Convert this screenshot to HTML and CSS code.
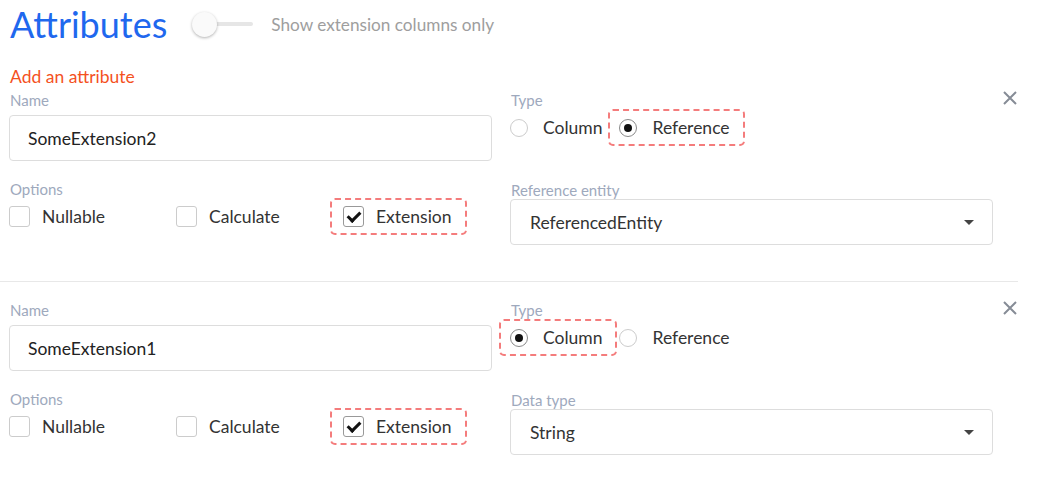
FILE: index.html
```html
<!DOCTYPE html>
<html lang="en">
<head>
    <meta charset="UTF-8">
    <title>Attributes</title>
    <link rel="stylesheet" href="styles.css">
</head>
<body>
    <div class="page">
        <header class="page-header">
            <h1>Attributes</h1>
            <div class="toggle">
                <span class="toggle-knob"></span>
                <span class="toggle-track"></span>
            </div>
            <span class="toggle-label">Show extension columns only</span>
        </header>

        <div class="add-link">Add an attribute</div>

        <!-- Attribute: reference -->
        <div class="attribute">
            <div class="col">
                <div class="field">
                    <label class="field-label">Name</label>
                    <input class="text-input" type="text" value="SomeExtension2">
                </div>
                <div class="field">
                    <label class="field-label">Options</label>
                    <div class="options">
                        <span class="option"><span class="checkbox"></span>Nullable</span>
                        <span class="option"><span class="checkbox"></span>Calculate</span>
                        <span class="option highlight check-hl"><span class="checkbox checked"></span>Extension</span>
                    </div>
                </div>
            </div>
            <div class="col">
                <div class="field">
                    <label class="field-label">Type</label>
                    <div class="radios">
                        <span class="option radio-option"><span class="radio"></span>Column</span>
                        <span class="option radio-option highlight radio-hl"><span class="radio checked"></span>Reference</span>
                    </div>
                </div>
                <div class="field field-select">
                    <label class="field-label">Reference entity</label>
                    <div class="select">
                        <span>ReferencedEntity</span>
                        <span class="caret"></span>
                    </div>
                </div>
            </div>
            <button class="close-btn" type="button">
                <svg width="14" height="14" viewBox="0 0 14 14"><path d="M1 1L13 13M13 1L1 13" stroke="#868c96" stroke-width="2"/></svg>
            </button>
        </div>

        <!-- Attribute: column -->
        <div class="attribute">
            <div class="col">
                <div class="field">
                    <label class="field-label">Name</label>
                    <input class="text-input" type="text" value="SomeExtension1">
                </div>
                <div class="field">
                    <label class="field-label">Options</label>
                    <div class="options">
                        <span class="option"><span class="checkbox"></span>Nullable</span>
                        <span class="option"><span class="checkbox"></span>Calculate</span>
                        <span class="option highlight check-hl"><span class="checkbox checked"></span>Extension</span>
                    </div>
                </div>
            </div>
            <div class="col">
                <div class="field">
                    <label class="field-label">Type</label>
                    <div class="radios">
                        <span class="option radio-option highlight radio-hl"><span class="radio checked"></span>Column</span>
                        <span class="option radio-option"><span class="radio"></span>Reference</span>
                    </div>
                </div>
                <div class="field field-select">
                    <label class="field-label">Data type</label>
                    <div class="select">
                        <span>String</span>
                        <span class="caret"></span>
                    </div>
                </div>
            </div>
            <button class="close-btn" type="button">
                <svg width="14" height="14" viewBox="0 0 14 14"><path d="M1 1L13 13M13 1L1 13" stroke="#868c96" stroke-width="2"/></svg>
            </button>
        </div>
    </div>
</body>
</html>
```

FILE: styles.css
```css
body {
    margin: 0;
    font-family: Lato, "Open Sans", sans-serif;
    color: #333333;
    background-color: #ffffff;
}

.page {
    width: 1018px;
}

/* Header */
.page-header {
    display: flex;
    align-items: center;
    padding: 3px 0 0 10px;
}

.page-header h1 {
    margin: 0;
    font-size: 36px;
    font-weight: 400;
    line-height: 42px;
    color: #1f68ee;
}

.toggle {
    display: flex;
    align-items: center;
    margin-left: 25px;
}

.toggle-knob {
    width: 25px;
    height: 25px;
    border-radius: 50%;
    background-color: #fafafa;
    box-shadow: 0 1px 3px rgba(0, 0, 0, 0.3);
    z-index: 1;
}

.toggle-track {
    width: 40px;
    height: 4px;
    margin-left: -4px;
    border-radius: 2px;
    background-color: #e6e6e6;
}

.toggle-label {
    margin-left: 18px;
    font-size: 17.2px;
    color: #9e9e9e;
}

.add-link {
    margin: 22px 0 0 10px;
    font-size: 17.5px;
    line-height: 20px;
    color: #f4511e;
}

/* Attribute block */
.attribute {
    display: flex;
    padding: 5px 0 36px 9px;
    border-bottom: 1px solid #e8e8e8;
}

.attribute + .attribute {
    padding-top: 20px;
}

.col {
    width: 483px;
}

.col + .col {
    margin-left: 18px;
}

.field-label {
    display: block;
    margin-left: 1px;
    font-size: 15px;
    line-height: 17px;
    color: #9ea9bd;
}

.field + .field {
    margin-top: 20px;
}

.text-input {
    box-sizing: border-box;
    width: 483px;
    height: 46px;
    margin-top: 6px;
    padding: 0 18px;
    border: 1px solid #dddddd;
    border-radius: 4px;
    font-family: inherit;
    font-size: 17.5px;
    color: #222222;
    outline: none;
}

.options {
    display: grid;
    grid-template-columns: repeat(3, 167px);
    justify-items: start;
    height: 37px;
}

.option {
    position: relative;
    display: inline-flex;
    align-items: center;
    font-size: 17.5px;
    color: #333333;
}

.checkbox {
    box-sizing: border-box;
    width: 21px;
    height: 21px;
    margin-right: 12px;
    border: 1px solid #cccccc;
    border-radius: 3px;
    background-color: #ffffff;
}

.checkbox.checked {
    position: relative;
    border-color: #999999;
}

.checkbox.checked::after {
    content: "";
    position: absolute;
    left: 6px;
    top: 2px;
    width: 5px;
    height: 10px;
    border: solid #111111;
    border-width: 0 3px 3px 0;
    transform: rotate(45deg);
}

.radios {
    display: flex;
    gap: 17px;
    height: 37px;
}

.radio {
    box-sizing: border-box;
    width: 18px;
    height: 18px;
    margin-right: 15px;
    border: 1px solid #cccccc;
    border-radius: 50%;
    display: flex;
    align-items: center;
    justify-content: center;
}

.radio.checked {
    border-color: #8a8a8a;
}

.radio.checked::after {
    content: "";
    width: 8px;
    height: 8px;
    border-radius: 50%;
    background-color: #111111;
}

/* Dashed highlight around changed options */
.highlight::before {
    content: "";
    position: absolute;
    top: 0;
    bottom: 0;
    border: 2px dashed #f47c7c;
    border-radius: 5px;
}

.radio-hl::before {
    left: -11px;
    right: -15px;
}

.check-hl::before {
    left: -13px;
    right: -15px;
}

.field-select {
    margin-top: 36px !important;
}

.select {
    box-sizing: border-box;
    display: flex;
    align-items: center;
    justify-content: space-between;
    height: 46px;
    margin-top: 0;
    padding: 0 18px 0 19px;
    border: 1px solid #dddddd;
    border-radius: 4px;
    font-size: 17.5px;
    color: #333333;
}

.caret {
    width: 0;
    height: 0;
    border-left: 5px solid transparent;
    border-right: 5px solid transparent;
    border-top: 5px solid #444444;
}

.close-btn {
    align-self: flex-start;
    margin: -1px 0 0 10px;
    padding: 0;
    border: none;
    background: none;
    cursor: pointer;
    line-height: 0;
}
```
